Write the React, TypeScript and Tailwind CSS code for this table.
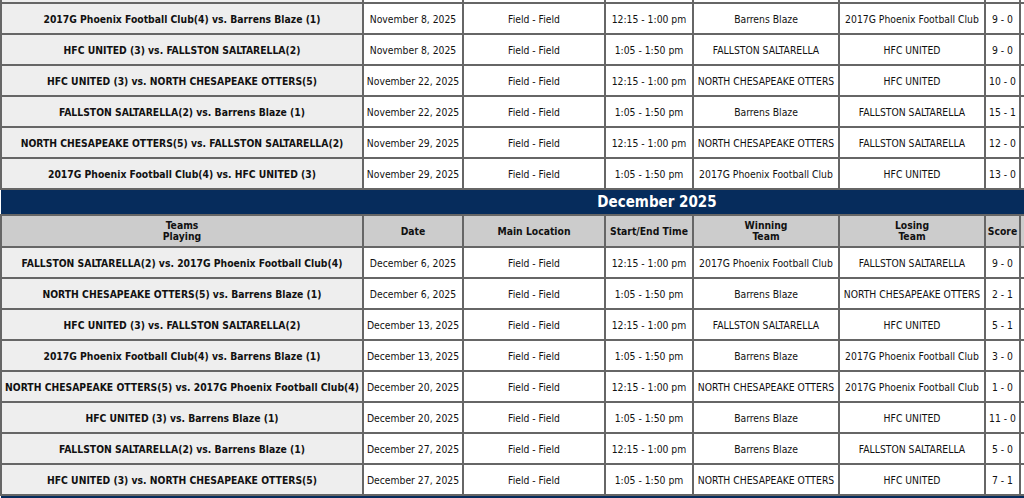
import React from "react";

type Game = {
  teams: string;
  date: string;
  time: string;
  winner: string;
  loser: string;
  score: string;
};

const november: Game[] = [
  { teams: "2017G Phoenix Football Club(4) vs. Barrens Blaze (1)", date: "November 8, 2025", time: "12:15 - 1:00 pm", winner: "Barrens Blaze", loser: "2017G Phoenix Football Club", score: "9 - 0" },
  { teams: "HFC UNITED (3) vs. FALLSTON SALTARELLA(2)", date: "November 8, 2025", time: "1:05 - 1:50 pm", winner: "FALLSTON SALTARELLA", loser: "HFC UNITED", score: "9 - 0" },
  { teams: "HFC UNITED (3) vs. NORTH CHESAPEAKE OTTERS(5)", date: "November 22, 2025", time: "12:15 - 1:00 pm", winner: "NORTH CHESAPEAKE OTTERS", loser: "HFC UNITED", score: "10 - 0" },
  { teams: "FALLSTON SALTARELLA(2) vs. Barrens Blaze (1)", date: "November 22, 2025", time: "1:05 - 1:50 pm", winner: "Barrens Blaze", loser: "FALLSTON SALTARELLA", score: "15 - 1" },
  { teams: "NORTH CHESAPEAKE OTTERS(5) vs. FALLSTON SALTARELLA(2)", date: "November 29, 2025", time: "12:15 - 1:00 pm", winner: "NORTH CHESAPEAKE OTTERS", loser: "FALLSTON SALTARELLA", score: "12 - 0" },
  { teams: "2017G Phoenix Football Club(4) vs. HFC UNITED (3)", date: "November 29, 2025", time: "1:05 - 1:50 pm", winner: "2017G Phoenix Football Club", loser: "HFC UNITED", score: "13 - 0" },
];

const december: Game[] = [
  { teams: "FALLSTON SALTARELLA(2) vs. 2017G Phoenix Football Club(4)", date: "December 6, 2025", time: "12:15 - 1:00 pm", winner: "2017G Phoenix Football Club", loser: "FALLSTON SALTARELLA", score: "9 - 0" },
  { teams: "NORTH CHESAPEAKE OTTERS(5) vs. Barrens Blaze (1)", date: "December 6, 2025", time: "1:05 - 1:50 pm", winner: "Barrens Blaze", loser: "NORTH CHESAPEAKE OTTERS", score: "2 - 1" },
  { teams: "HFC UNITED (3) vs. FALLSTON SALTARELLA(2)", date: "December 13, 2025", time: "12:15 - 1:00 pm", winner: "FALLSTON SALTARELLA", loser: "HFC UNITED", score: "5 - 1" },
  { teams: "2017G Phoenix Football Club(4) vs. Barrens Blaze (1)", date: "December 13, 2025", time: "1:05 - 1:50 pm", winner: "Barrens Blaze", loser: "2017G Phoenix Football Club", score: "3 - 0" },
  { teams: "NORTH CHESAPEAKE OTTERS(5) vs. 2017G Phoenix Football Club(4)", date: "December 20, 2025", time: "12:15 - 1:00 pm", winner: "NORTH CHESAPEAKE OTTERS", loser: "2017G Phoenix Football Club", score: "1 - 0" },
  { teams: "HFC UNITED (3) vs. Barrens Blaze (1)", date: "December 20, 2025", time: "1:05 - 1:50 pm", winner: "Barrens Blaze", loser: "HFC UNITED", score: "11 - 0" },
  { teams: "FALLSTON SALTARELLA(2) vs. Barrens Blaze (1)", date: "December 27, 2025", time: "12:15 - 1:00 pm", winner: "Barrens Blaze", loser: "FALLSTON SALTARELLA", score: "5 - 0" },
  { teams: "HFC UNITED (3) vs. NORTH CHESAPEAKE OTTERS(5)", date: "December 27, 2025", time: "1:05 - 1:50 pm", winner: "NORTH CHESAPEAKE OTTERS", loser: "HFC UNITED", score: "7 - 1" },
];

const cell = "border-2 border-[#666] p-0 text-center align-middle whitespace-nowrap";

const GameRow = ({ g }: { g: Game }) => (
  <tr className="h-[31px]">
    <td className={`${cell} bg-[#eeeeee] font-bold`}>{g.teams}</td>
    <td className={cell}>{g.date}</td>
    <td className={cell}>Field - Field</td>
    <td className={cell}>{g.time}</td>
    <td className={cell}>{g.winner}</td>
    <td className={cell}>{g.loser}</td>
    <td className={cell}>{g.score}</td>
    <td className={cell}></td>
  </tr>
);

// row scrolled off the top: only its bottom edge shows
const CutRow = () => (
  <tr className="h-[31px]">
    <td className={`${cell} bg-[#eeeeee]`}></td>
    <td className={cell}></td>
    <td className={cell}></td>
    <td className={cell}></td>
    <td className={cell}></td>
    <td className={cell}></td>
    <td className={cell}></td>
    <td className={cell}></td>
  </tr>
);

const HeaderRow = () => (
  <tr className="h-[32px] bg-[#cccccc] font-bold leading-[11px]">
    <td className={cell}>Teams<br />Playing</td>
    <td className={cell}>Date</td>
    <td className={cell}>Main Location</td>
    <td className={cell}>Start/End Time</td>
    <td className={cell}>Winning<br />Team</td>
    <td className={cell}>Losing<br />Team</td>
    <td className={cell}>Score</td>
    <td className={cell}></td>
  </tr>
);

const MonthRow = ({ label }: { label: string }) => (
  <tr className="h-[26px] bg-[#062c5c]">
    <td colSpan={8} className="border-2 border-x-0 border-[#666] p-0 text-center text-[15px] font-bold leading-[18px] text-white">
      {label}
    </td>
  </tr>
);

export default function App() {
  return (
    <div className="h-[498px] w-[1024px] overflow-hidden bg-white">
      <table
        className="-mt-[29px] w-[1312px] table-fixed border-collapse text-[10.3px] leading-[12px] text-[#111] font-stretch-condensed"
        style={{ fontFamily: '"DejaVu Sans Condensed", "DejaVu Sans", Verdana, sans-serif' }}
      >
        <colgroup>
          <col className="w-[362px]" />
          <col className="w-[100px]" />
          <col className="w-[142px]" />
          <col className="w-[88px]" />
          <col className="w-[146px]" />
          <col className="w-[146px]" />
          <col className="w-[35px]" />
          <col className="w-[293px]" />
        </colgroup>
        <tbody>
          <CutRow />
          {november.map((g, i) => (
            <GameRow key={i} g={g} />
          ))}
          <MonthRow label="December 2025" />
          <HeaderRow />
          {december.map((g, i) => (
            <GameRow key={i} g={g} />
          ))}
          <MonthRow label="" />
        </tbody>
      </table>
    </div>
  );
}
